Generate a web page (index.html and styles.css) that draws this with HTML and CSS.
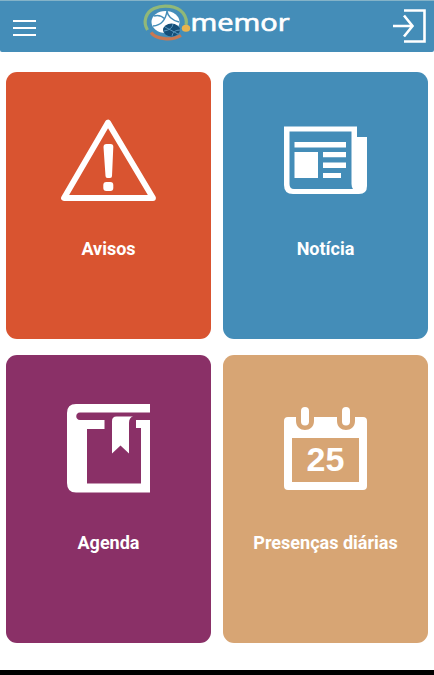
FILE: index.html
```html
<!DOCTYPE html>
<html lang="pt">
<head>
<meta charset="utf-8">
<title>memor</title>
<link rel="stylesheet" href="styles.css">
</head>
<body>
<div class="screen">
  <header class="bar">
    <svg class="menu" viewBox="0 1 60 51" fill="none" stroke="#fff" stroke-width="2.2"><path d="M13 21H36M13 28H36M13 35H36"/></svg>
    <svg class="logo" viewBox="135 1 160 51">
      <g fill="none" stroke-width="3.2">
        <path d="M147.500 30C142.500 22 146 12 154 8.500C164 4 177 6 183 13C186 17 187 21 186 25" stroke="#91b878"/>
        <path d="M151 32.500C156 39.500 172 41 181 35.500" stroke="#c97851"/>
      </g>
      <ellipse cx="165.500" cy="22" rx="14" ry="11" fill="#fff"/>
      <path d="M153 26Q165 25 167 11M167 11Q168 19 179 22M154 16Q160 14 165 19" fill="none" stroke="#448db8" stroke-width="1.500"/>
      <ellipse cx="171.500" cy="30" rx="8.500" ry="6.500" fill="#154f79"/>
      <path d="M164 31Q172 30 173 24M172 36Q173 30 180 30M165 27L178 34" fill="none" stroke="#5796bd" stroke-width="1"/>
      <ellipse cx="186" cy="28.300" rx="4.200" ry="3.500" fill="#e9b34e"/>
      <text class="brand" x="190.500" y="31.300" textLength="99" lengthAdjust="spacingAndGlyphs">memor</text>
    </svg>
    <svg class="exit" viewBox="374 1 60 51" fill="none" stroke="#fff" stroke-width="2.600"><path d="M404 10.500H424.500V41.500H404M393 26H412M404 15.500L412.500 26L404 36.500"/></svg>
  </header>
  <main class="grid">
    <a class="card red">
      <svg class="icon" viewBox="54 112 109 100">
        <path d="M108 122.500L64 198H153Z" fill="none" stroke="#fff" stroke-width="5.800" stroke-linejoin="round"/>
        <path d="M103.500 147Q103.500 144 106.500 144H110.500Q113.500 144 113.300 147L112 176Q112 178 110 178H107.500Q105.500 178 105.500 176Z" fill="#fff"/>
        <rect x="103.300" y="182" width="10" height="9" rx="3" fill="#fff"/>
      </svg>
      <span class="label">Avisos</span>
    </a>
    <a class="card blue">
      <svg class="icon" viewBox="271 112 109 100" fill="#fff">
        <path fill-rule="evenodd" d="M284 126.500H357V137H367V186Q367 194 359 194H293Q284 194 284 185ZM289.500 131.500V184Q289.500 189 294 189H353Q351.500 187 351.500 184V131.500Z"/>
        <path d="M294.500 142H346V147.500H294.500ZM294.500 152H318V178H294.500ZM323 152H346V157.300H323ZM323 162.500H346V168H323ZM323 173H341V178H323Z"/>
      </svg>
      <span class="label">Notícia</span>
    </a>
    <a class="card purple">
      <svg class="icon" viewBox="54 400 109 100" fill="#fff">
        <path d="M150 404H76Q67 404 67 413V483Q67 492.500 76 492.500H150V420H136V428H141V483.500H87V429H104.500V420H80C75 420 75 412.500 80 412.500H150Z"/>
        <path d="M112 453.500V421Q112 416.500 116.500 416.500H133Q129 417.500 129 423V453.500L120.500 445.500Z"/>
      </svg>
      <span class="label">Agenda</span>
    </a>
    <a class="card tan">
      <svg class="icon" viewBox="271 400 109 100" fill="#fff">
        <path fill-rule="evenodd" d="M288 417H296V421C296 433 314 433 314 421V417H337V421C337 433 355 433 355 421V417H363Q367 417 367 421V486Q367 490 363 490H288Q284 490 284 486V421Q284 417 288 417ZM292 438V482H359V438Z"/>
        <rect x="301" y="407" width="8" height="18.500" rx="4"/>
        <rect x="342" y="407" width="8" height="18.500" rx="4"/>
        <text class="day" x="325.500" y="471" text-anchor="middle">25</text>
      </svg>
      <span class="label">Presenças diárias</span>
    </a>
  </main>
  <div class="navbar"></div>
</div>
</body>
</html>
```
FILE: styles.css
```css
body {
  margin: 0;
  background: #fff;
  font-family: Roboto, "Liberation Sans", sans-serif;
}
.screen {
  display: flex;
  flex-direction: column;
  height: 675px;
  overflow: hidden;
}
.bar {
  display: flex;
  justify-content: space-between;
  box-sizing: border-box;
  height: 52px;
  border-top: 1px solid #84b3c8;
  border-radius: 0 0 2px 2px;
  background: #448db8;
}
.menu, .exit {
  width: 60px;
  height: 51px;
}
.logo {
  width: 160px;
  height: 51px;
  margin-right: 4px;
}
.brand {
  font: 400 23px "Open Sans", sans-serif;
  fill: #fff;
  stroke: #fff;
  stroke-width: 0.7px;
}
.grid {
  flex: 1;
  display: grid;
  grid-template-columns: 205px 205px;
  grid-template-rows: 267px 288px;
  gap: 16px 12px;
  padding: 20px 6px 0;
}
.card {
  display: flex;
  flex-direction: column;
  align-items: center;
  box-sizing: border-box;
  padding-top: 40px;
  border-radius: 11px;
  color: #fff;
}
.red { background: #d95430; }
.blue { background: #448db8; }
.purple { background: #8a3067; }
.tan { background: #d7a574; }
.icon {
  width: 109px;
  height: 100px;
}
.label {
  margin-top: 26px;
  font-size: 18px;
  font-weight: 700;
  line-height: 22px;
}
.purple, .tan { padding-top: 45px; }
.purple .label, .tan .label { margin-top: 32px; }
.day {
  font: 700 34px "Liberation Sans", sans-serif;
}
.navbar {
  height: 5px;
  background: #000;
}
```
